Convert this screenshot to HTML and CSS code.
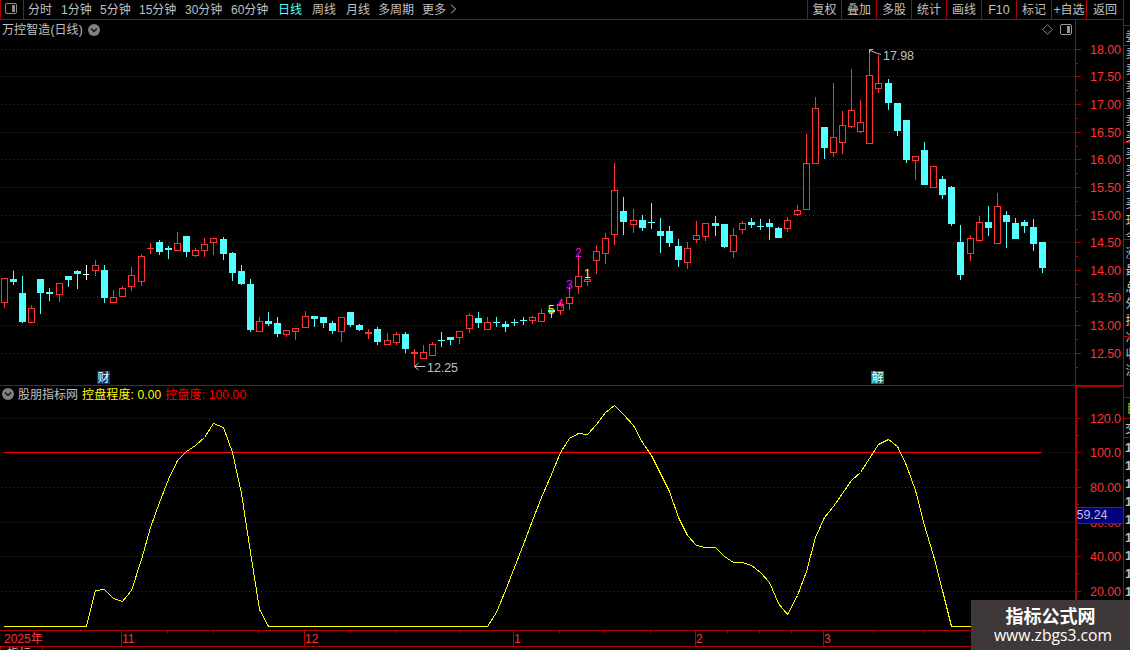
FILE: index.html
```html
<!DOCTYPE html>
<html lang="zh-CN">
<head>
<meta charset="utf-8">
<title>万控智造(日线)</title>
<link rel="stylesheet" href="styles.css">
</head>
<body>
<div class="app">
  <main class="main">
    <header class="toolbar">
      <div class="layout-toggle">
        <svg width="13" height="11" viewBox="0 0 13 11"><rect x="0.5" y="0.5" width="11" height="10" rx="1.5" fill="none" stroke="#8c8c8c"/><rect x="7" y="2" width="3" height="7" fill="#8c8c8c"/></svg>
      </div>
      <nav class="periods">
        <span>分时</span><span>1分钟</span><span>5分钟</span><span>15分钟</span><span>30分钟</span><span>60分钟</span><span class="active">日线</span><span>周线</span><span>月线</span><span>多周期</span><span>更多</span>
        <svg class="more" width="7" height="10" viewBox="0 0 7 10"><path d="M1 0.5 L5.5 5 L1 9.5" fill="none" stroke="#c0c0c0"/></svg>
      </nav>
      <nav class="tools">
        <span>复权</span><span>叠加</span><span>多股</span><span>统计</span><span>画线</span><span class="latin">F10</span><span>标记</span><span>+自选</span><span>返回</span>
      </nav>
    </header>

    <section class="panel price">
      <svg id="price" class="canvas" width="1123" height="366" viewBox="0 20 1123 366"></svg>
      <div class="title">
        <span>万控智造(日线)</span>
        <svg width="12" height="12" viewBox="0 0 12 12"><circle cx="6" cy="6" r="6" fill="#808080"/><path d="M3 4.5 L6 7.5 L9 4.5" fill="none" stroke="#111" stroke-width="1.3"/></svg>
      </div>
      <div class="corner">
        <svg width="11" height="11" viewBox="0 0 11 11"><path d="M5.5 0.7 L10.3 5.5 L5.5 10.3 L0.7 5.5 Z" fill="none" stroke="#8c8c8c"/></svg>
        <svg width="12" height="11" viewBox="0 0 12 11"><rect x="0.5" y="0.5" width="11" height="10" rx="1.5" fill="none" stroke="#9a9a9a"/><rect x="7" y="2" width="3" height="7" fill="#9a9a9a"/></svg>
      </div>
    </section>

    <section class="panel indicator">
      <svg id="indicator" class="canvas" width="1123" height="244" viewBox="0 386 1123 244"></svg>
      <div class="title">
        <svg width="12" height="12" viewBox="0 0 12 12"><circle cx="6" cy="6" r="6" fill="#808080"/><path d="M3 4.5 L6 7.5 L9 4.5" fill="none" stroke="#111" stroke-width="1.3"/></svg>
        <span class="name">股朋指标网</span>
        <span class="degree">控盘程度: 0.00</span>
        <span class="full">控盘度: 100.00</span>
      </div>
    </section>

    <svg id="time" class="canvas" width="1123" height="17" viewBox="0 630 1123 17"></svg>
    <footer class="tabs"><span class="tab">指标</span></footer>
  </main>
  <aside class="side" id="side"></aside>
  <div class="watermark"><b>指标公式网</b><span>www.zbgs3.com</span></div>
</div>
<script src="chart.js"></script>
</body>
</html>
```
FILE: styles.css
```css
* { box-sizing: border-box; }
body {
  margin: 0;
  background: #000;
  color: #c0c0c0;
  font: 12px/18px "Liberation Sans", "Noto Sans CJK SC", sans-serif;
}
.app {
  position: relative;
  display: grid;
  grid-template-columns: 1123px 7px;
  width: 1130px;
  height: 650px;
  overflow: hidden;
}
.main { display: flex; flex-direction: column; height: 650px; overflow: hidden; }
.canvas { display: block; flex: none; }

.toolbar {
  display: flex;
  flex: none;
  height: 20px;
  border-bottom: 1px solid #b00000;
  line-height: 20px;
  white-space: nowrap;
}
.layout-toggle {
  width: 24px;
  border-left: 1px solid #b00000;
  border-right: 1px solid #b00000;
  padding: 3px 0 0 4px;
}
.layout-toggle svg { display: block; }
.periods {
  display: grid;
  grid-template-columns: 33px 39px 39px 46px 46px 47px 34px 34px 32px 44px 28px 10px;
  padding-left: 4px;
}
.more { margin-top: 4px; }
.active { color: #54ffff; }
.tools {
  display: grid;
  grid-template-columns: 34px repeat(7, 35px) 37px;
  margin-left: auto;
}
.tools span { border-left: 1px solid #b00000; text-align: center; }
.tools .latin { font-size: 12.5px; }

.panel { position: relative; flex: none; }
.title {
  position: absolute;
  left: 2px;
  top: 1px;
  display: flex;
  align-items: center;
  gap: 5px;
  height: 18px;
  white-space: nowrap;
}
.price .title { letter-spacing: 0.1px; }
.price .title svg { margin-top: -1px; }
.indicator .title { gap: 4px; top: 0; }
.indicator .title svg { margin-top: -2px; }
.degree { color: #ff0; letter-spacing: 0.12px; }
.full { color: #f00; letter-spacing: 0.15px; }
.corner { position: absolute; left: 1042px; top: 4px; display: flex; gap: 7px; }

.candle-up { fill: #000; stroke: #ff3232; }
.up { fill: #ff3232; }
.down { fill: #54ffff; }
.flat { fill: #fff; }
.axis { fill: #b00000; }
.grid { stroke: #b00000; stroke-dasharray: 1 3; }
.scale { fill: #ff3232; font-size: 12.5px; text-anchor: end; }
.note { fill: #c0c0c0; font-size: 12.5px; }
.row { fill: #c0c0c0; font-size: 12.5px; font-weight: bold; }
.dates { fill: #ff3232; font-size: 12px; }
.curve { fill: none; stroke: #ff0; }

.tabs { display: flex; height: 3px; overflow: hidden; color: #c0c0c0; }
.tab { width: 43px; border-left: 1px solid #b00000; border-right: 1px solid #b00000; padding-left: 6px; line-height: 14px; }

.side {
  position: relative;
  height: 650px;
  border-left: 1px solid #b00000;
  overflow: hidden;
}
.side svg { display: block; }

.watermark {
  position: absolute;
  left: 971px;
  top: 600px;
  width: 159px;
  height: 50px;
  padding-top: 4px;
  display: flex;
  flex-direction: column;
  align-items: center;
  background: #3f3838;
  color: #fff;
}
.watermark b { font: bold 18px/23px "Noto Sans CJK SC", sans-serif; }
.watermark span { padding-left: 5px; font: 15.7px/17px "Open Sans", "Noto Sans", sans-serif; }
```
FILE: chart.js
```js
// x, high, body top, body bottom, low, kind (r = rise, f = fall, w = unchanged)
const candles = `4,278,278,303,308,r;13,271,279,282,285,f;22,276,293,322,323,f;31,305,308,323,323,r;40,279,279,293,314,f;49,288,292,294,301,f;59,283,283,295,302,r;68,276,276,280,287,f;77,270,271,274,289,f;86,265,274,275,280,w;95,260,265,271,276,r;104,265,270,298,303,f;113,290,297,303,303,r;122,286,288,297,297,r;131,267,275,287,291,r;141,254,256,282,286,r;150,243,248,249,254,r;159,240,242,252,255,f;168,246,248,250,259,f;177,232,243,251,251,r;186,236,236,252,257,f;195,248,250,256,257,r;204,238,244,251,257,r;213,238,238,243,255,r;223,237,239,254,260,f;232,252,253,273,281,f;241,265,271,284,285,f;250,279,284,330,332,f;259,317,321,332,332,r;268,312,321,324,326,f;277,317,323,334,337,f;286,330,330,335,337,r;295,328,328,332,340,r;305,311,316,328,328,r;314,316,316,319,327,f;323,317,317,323,328,f;332,321,323,331,334,f;341,317,317,332,342,r;350,312,312,325,327,f;359,324,325,330,331,f;368,329,332,334,339,r;377,327,329,342,345,f;387,333,340,345,345,r;396,332,334,343,345,r;405,332,334,349,353,f;414,349,352,354,367,r;423,345,352,359,359,r;432,342,344,356,356,r;441,332,340,341,347,f;450,337,337,340,345,f;459,331,331,338,344,r;469,313,315,329,333,r;478,312,318,323,328,f;487,317,322,330,330,r;496,317,322,323,327,f;505,321,324,327,332,f;514,319,322,323,326,f;523,317,320,321,325,f;532,316,317,321,324,r;541,309,313,322,322,r;551,310,310,312,318,f;560,302,304,311,315,r;569,286,297,304,310,r;578,255,276,287,294,r;587,277,279,282,286,r;596,245,251,261,274,r;605,233,238,254,264,r;614,163,190,235,245,r;623,197,211,222,235,f;633,209,220,225,233,r;642,215,220,228,231,f;651,203,222,223,229,f;660,218,231,236,253,f;669,226,231,243,247,f;678,239,246,260,267,f;687,242,248,263,269,r;696,221,235,240,243,r;705,223,223,237,241,r;715,216,223,226,236,f;724,224,224,247,248,f;733,228,235,252,258,r;742,221,223,230,234,r;751,218,222,225,228,f;760,219,226,227,230,f;769,219,223,227,240,f;778,227,228,238,238,f;787,217,220,229,232,r;797,205,210,215,216,r;806,134,163,210,210,r;815,97,108,164,164,r;824,127,127,148,159,f;833,83,137,153,157,r;842,111,125,143,154,r;851,69,110,127,128,r;860,100,122,132,133,r;869,53,75,144,144,r;878,55,83,89,93,r;888,79,83,103,110,f;897,103,103,131,136,f;906,120,120,160,163,f;915,156,156,161,180,r;924,142,150,185,185,f;933,166,166,188,188,r;942,176,179,195,199,f;951,186,187,224,226,f;960,225,242,275,280,f;970,235,238,254,261,r;979,216,222,241,242,r;988,206,222,228,236,f;997,193,206,244,244,r;1006,211,215,222,248,f;1015,218,223,239,239,f;1024,220,222,226,233,f;1033,219,227,244,251,f;1042,242,242,268,273,f`
  .split(";").map(s => s.split(","));

const curve = "3.5,626 86,626 95,590 104,589 113,598 122,601 131,590 141,559 150,527 159,502 168,479 177,460 186,451 195,445 204,437 213,423 223,427 232,452 241,493 250,552 259,609 268,626 487,626 496,612 505,590 514,567 523,544 532,520 541,497 551,474 560,452 569,438 578,433 587,434 596,424 605,412 614,405 623,414 633,425 642,442 651,455 660,473 669,491 678,517 687,535 696,545 705,547 715,547 724,556 733,562 742,562 751,565 760,572 769,582 778,603 787,614 797,595 806,571 815,537 824,517 833,506 842,493 851,480 860,472 869,458 878,444 888,439 897,446 906,465 915,490 924,525 933,555 942,590 951,626 1042,626";

const rect = (x, y, w, h, cls) => `<rect class="${cls}" x="${x}" y="${y}" width="${w}" height="${h}" shape-rendering="crispEdges"/>`;
const grid = y => `<line class="grid" x1="1" x2="1074" y1="${y + .5}" y2="${y + .5}" shape-rendering="crispEdges"/>`;
const text = (x, y, s, cls, extra = "") => `<text class="${cls}" x="${x}" y="${y}" ${extra}>${s}</text>`;
const fixed = 'textLength="31" lengthAdjust="spacing"';

// Price panel
let out = "";
const levels = [49, 76, 104, 132, 159, 187, 215, 242, 270, 297, 325, 353];
levels.forEach((y, i) => {
  out += grid(y) + rect(1075, y, 6, 1, "axis") + rect(1075, y + 14, 3, 1, "axis");
  out += text(1121, y + 5, (18 - i / 2).toFixed(2), "scale", fixed);
});
out += rect(1075, 20, 1, 366, "axis") + rect(0, 385, 1075, 1, "axis") + rect(1075, 385, 48, 1, "axis");
for (const [xs, hs, ts, bs, ls, kind] of candles) {
  const [x, h, t, b, l] = [xs, hs, ts, bs, ls].map(Number);
  const cls = { r: "up", f: "down", w: "flat" }[kind];
  if (kind === "r" && b - t > 2) {
    out += rect(x, h, 1, t - h, cls) + rect(x, b, 1, l - b, cls);
    out += `<rect class="candle-up" x="${x - 2.5}" y="${t + .5}" width="6" height="${b - t - 1}" shape-rendering="crispEdges"/>`;
  } else {
    const w = kind === "w" ? 6 : 7;
    out += rect(x, h, 1, l - h, cls) + rect(x - 3, t, w, b - t, cls);
  }
}
out += '<path d="M873 49.5 H869.5 V53 M870 50.5 L875 52.5 L881 54.5" fill="none" stroke="#c0c0c0"/>';
out += text(883, 60, "17.98", "note", fixed);
out += '<path d="M425.5 366.5 H414.5 M418.5 363 L414.5 366.5 L418.5 370" fill="none" stroke="#c0c0c0"/>';
out += text(427, 372, "12.25", "note", fixed);
[[548, 314, 5, "#ff0"], [557, 308, 4, "#f0f"], [566, 289, 3, "#f0f"], [575, 257, 2, "#f0f"], [584, 278, 1, "#ff0"]]
  .forEach(([x, y, s, c]) => out += text(x, y, s, "mark", `fill="${c}" font-size="12"`));
out += '<rect x="97" y="371" width="13" height="13" fill="#003c78"/>' + text(97.5, 382, "财", "mark", 'fill="#fff"');
out += '<rect x="871" y="371" width="13" height="13" fill="#008080"/>' + text(871.5, 382, "解", "mark", 'fill="#fff"');
document.getElementById("price").innerHTML = out;

// Indicator panel
out = "";
[[418, "120.0"], [452, "100.0"], [487, "80.00"], [522, "60.00"], [556, "40.00"], [591, "20.00"]].forEach(([y, s]) => {
  out += grid(y) + rect(1077, y, 4, 1, "axis") + rect(1077, y + 17, 2, 1, "axis") + text(1121, y + 5, s, "scale", fixed);
});
out += rect(1075, 386, 2, 244, "axis") + rect(1075, 386, 48, 1, "axis");
out += '<rect x="4" y="452" width="1038" height="1" fill="#f00"/>';
out += `<polyline class="curve" points="${curve}" transform="translate(.5 .5)" shape-rendering="crispEdges"/>`;
out += '<rect x="1077" y="508" width="46" height="15" fill="#000080"/>' + rect(1077, 507, 46, 1, "axis") + rect(1077, 523, 46, 1, "axis");
out += text(1076.5, 519, "59.24", "note", fixed);
document.getElementById("indicator").innerHTML = out;

// Time axis
out = rect(0, 630, 1123, 1, "axis") + rect(0, 646, 1123, 1, "axis");
[121, 304, 513, 695, 823].forEach(x => out += rect(x, 630, 1, 16, "axis"));
[167, 213, 258, 350, 395, 459, 559, 604, 650, 727, 759, 791, 873, 923].forEach(x => out += rect(x, 631, 1, 2, "axis"));
[[4, "2025年"], [122, "11"], [305, "12"], [514, "1"], [696, "2"], [824, "3"]].forEach(([x, s]) => out += text(x, 643, s, "dates"));
document.getElementById("time").innerHTML = out;

// Quote list, cut off by the window edge
out = '<svg width="6" height="650" viewBox="1124 0 6 650">';
[25, 45, 142, 239, 336, 397, 418, 437].forEach(y => out += rect(1124, y, 6, 1, "axis"));
[..."委卖卖卖卖卖买买买买买现今涨最总外换净收流".slice(0, 21)].forEach((c, i) => out += text(1125.5, 41 + i * 16.7, c, "note"));
out += text(1126.5, 413, "目", "mark", 'fill="#cc0"') + text(1125, 433, "交", "note");
for (let y = 452; y < 600; y += 18) out += text(1125, y, "1", "row");
document.getElementById("side").innerHTML = out + "</svg>";
```
